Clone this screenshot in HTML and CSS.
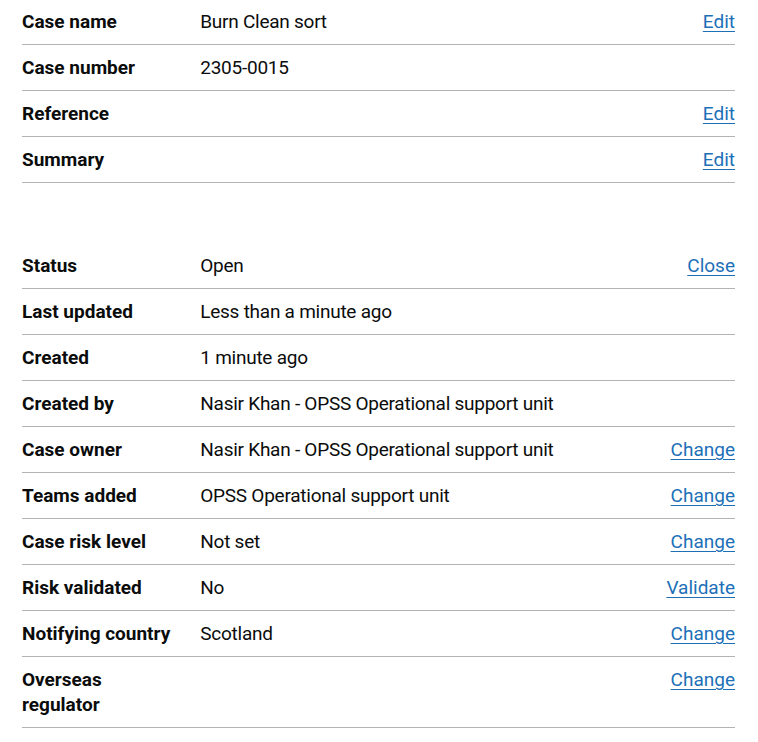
FILE: index.html
```html
<!DOCTYPE html>
<html lang="en">
<head>
<meta charset="utf-8">
<title>Case summary</title>
<link rel="stylesheet" href="styles.css">
</head>
<body>
<main class="page">
  <dl class="summary-list">
    <div class="row">
      <dt class="key">Case name</dt>
      <dd class="value">Burn Clean sort</dd>
      <dd class="actions"><a class="link" href="#">Edit</a></dd>
    </div>
    <div class="row">
      <dt class="key">Case number</dt>
      <dd class="value">2305-0015</dd>
      <dd class="actions"></dd>
    </div>
    <div class="row">
      <dt class="key">Reference</dt>
      <dd class="value"></dd>
      <dd class="actions"><a class="link" href="#">Edit</a></dd>
    </div>
    <div class="row">
      <dt class="key">Summary</dt>
      <dd class="value"></dd>
      <dd class="actions"><a class="link" href="#">Edit</a></dd>
    </div>
  </dl>

  <dl class="summary-list">
    <div class="row">
      <dt class="key">Status</dt>
      <dd class="value">Open</dd>
      <dd class="actions"><a class="link" href="#">Close</a></dd>
    </div>
    <div class="row">
      <dt class="key">Last updated</dt>
      <dd class="value">Less than a minute ago</dd>
      <dd class="actions"></dd>
    </div>
    <div class="row">
      <dt class="key">Created</dt>
      <dd class="value">1 minute ago</dd>
      <dd class="actions"></dd>
    </div>
    <div class="row">
      <dt class="key">Created by</dt>
      <dd class="value">Nasir Khan - OPSS Operational support unit</dd>
      <dd class="actions"></dd>
    </div>
    <div class="row">
      <dt class="key">Case owner</dt>
      <dd class="value">Nasir Khan - OPSS Operational support unit</dd>
      <dd class="actions"><a class="link" href="#">Change</a></dd>
    </div>
    <div class="row">
      <dt class="key">Teams added</dt>
      <dd class="value">OPSS Operational support unit</dd>
      <dd class="actions"><a class="link" href="#">Change</a></dd>
    </div>
    <div class="row">
      <dt class="key">Case risk level</dt>
      <dd class="value">Not set</dd>
      <dd class="actions"><a class="link" href="#">Change</a></dd>
    </div>
    <div class="row">
      <dt class="key">Risk validated</dt>
      <dd class="value">No</dd>
      <dd class="actions"><a class="link" href="#">Validate</a></dd>
    </div>
    <div class="row">
      <dt class="key">Notifying country</dt>
      <dd class="value">Scotland</dd>
      <dd class="actions"><a class="link" href="#">Change</a></dd>
    </div>
    <div class="row">
      <dt class="key">Overseas regulator</dt>
      <dd class="value"></dd>
      <dd class="actions"><a class="link" href="#">Change</a></dd>
    </div>
  </dl>
</main>
</body>
</html>
```

FILE: styles.css
```css
html, body {
  margin: 0;
  padding: 0;
  background: #ffffff;
}

body {
  font-family: Roboto, "Liberation Sans", Arial, sans-serif;
  color: #0b0c0c;
  font-size: 19px;
  line-height: 25px;
}

.page {
  margin: -1px 23px 0 22px;
}

.summary-list {
  margin: 0 0 60px 0;
  padding: 0;
}

.summary-list:last-child {
  margin-bottom: 0;
}

.row {
  display: flex;
  border-bottom: 1px solid #b1b4b6;
}

.key,
.value,
.actions {
  margin: 0;
  padding: 10px 20px 10px 0;
}

.key {
  width: 25%;
  flex: 0 0 25%;
  box-sizing: border-box;
  font-weight: 700;
}

.value {
  flex: 1 1 auto;
  letter-spacing: -0.25px;
}

.actions {
  flex: 0 0 auto;
  padding-right: 0;
  text-align: right;
}

.link {
  color: #1d70b8;
  text-decoration: underline;
  text-decoration-thickness: 1px;
  text-underline-offset: 0.1578em;
}
```
